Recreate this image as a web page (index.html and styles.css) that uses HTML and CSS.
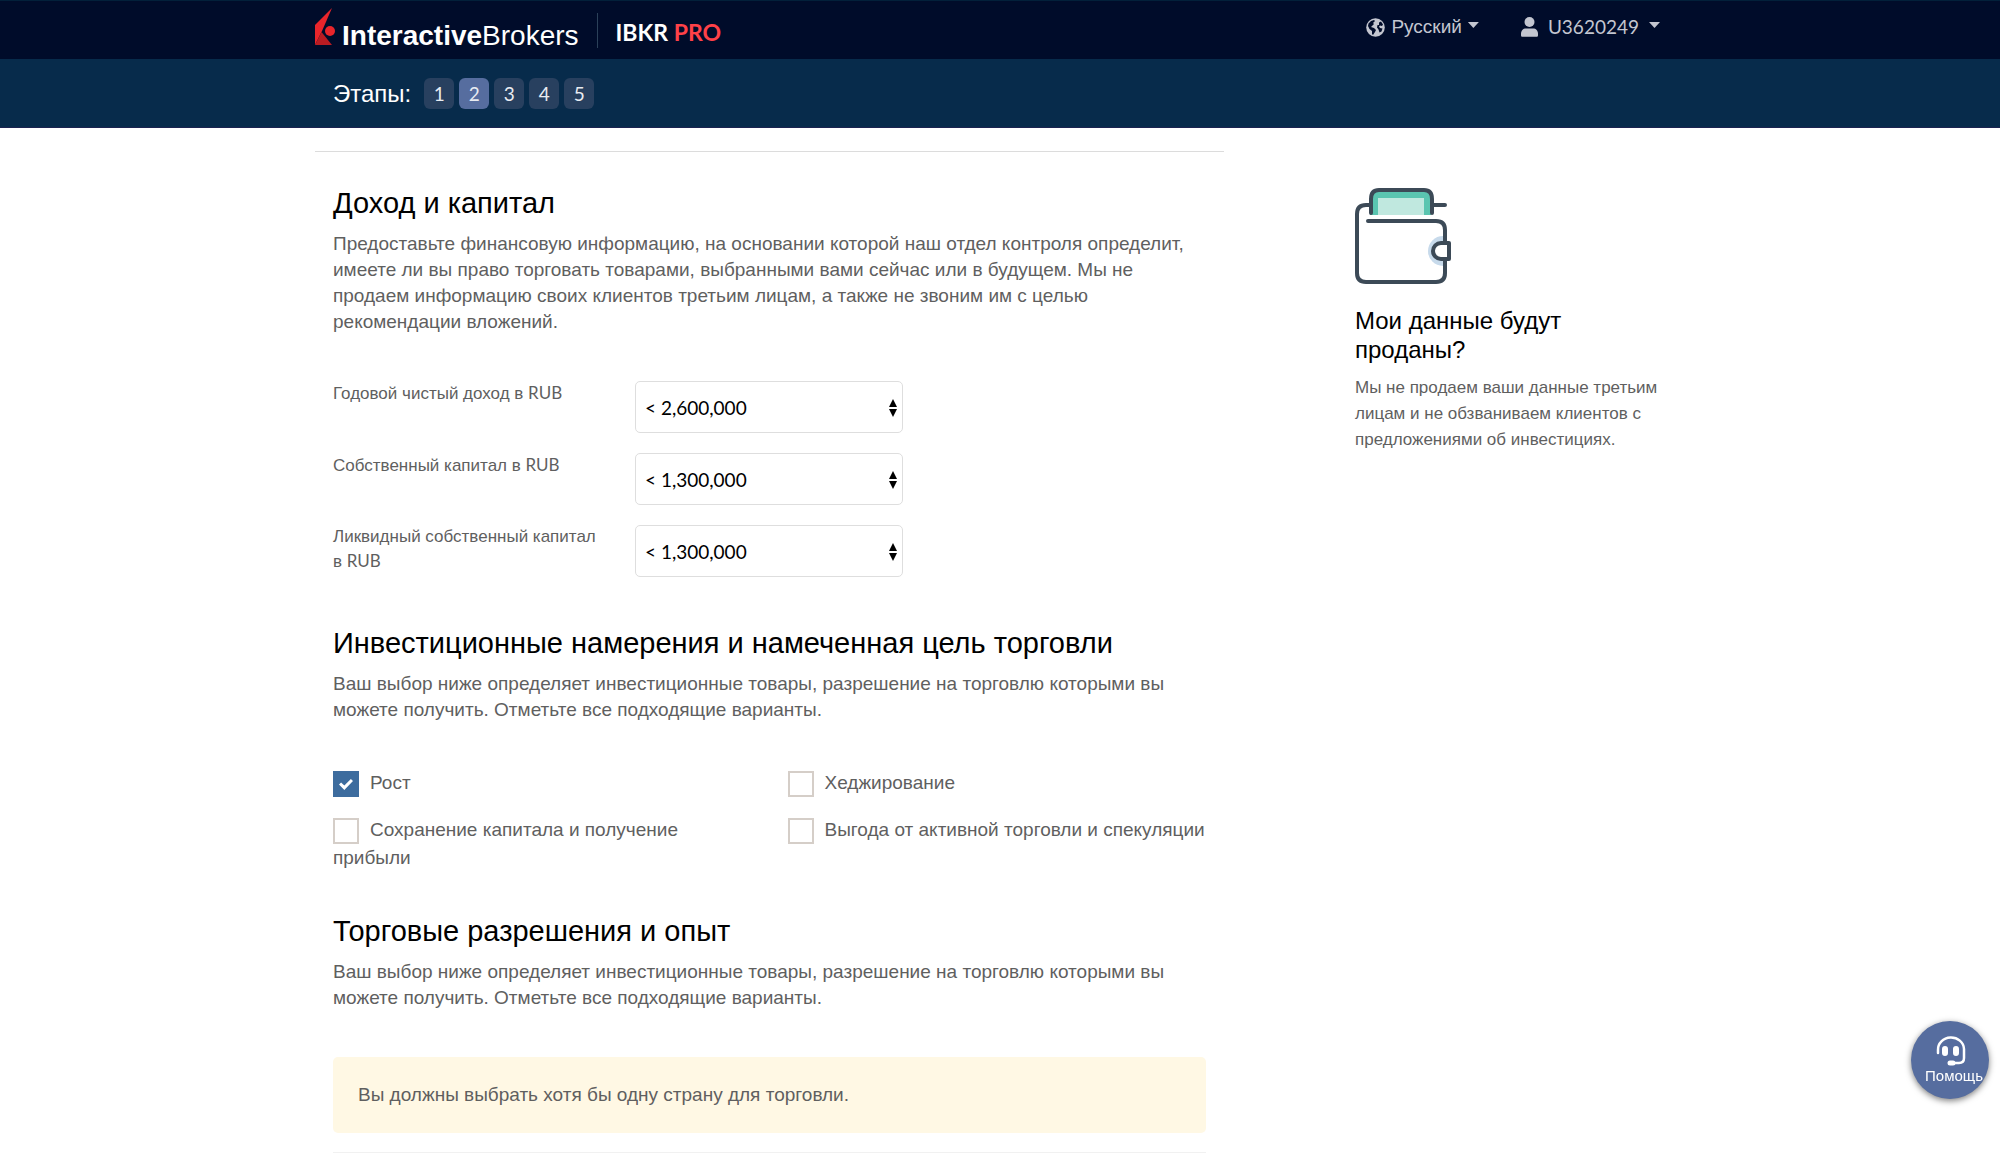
FILE: index.html
```html
<!DOCTYPE html>
<html lang="ru">
<head>
<meta charset="utf-8">
<meta name="viewport" content="width=device-width, initial-scale=1">
<title>Доход и капитал</title>
<link rel="stylesheet" href="styles.css">
</head>
<body>
<header class="topbar">
  <div class="container topbar-inner">
    <a class="brand" href="#">
      <svg class="brand-mark" width="21" height="38" viewBox="0 0 21 38" aria-hidden="true">
        <path d="M17 0 0 17v20L7 23Z" fill="#e8252b"/>
        <path d="M0 37 6.500 24 17 37Z" fill="#b91c22"/>
        <circle cx="15" cy="23" r="5" fill="#e8252b"/>
      </svg>
      <span class="brand-name"><b>Interactive</b>Brokers</span>
    </a>
    <span class="plan">IBKR <span class="plan-pro">PRO</span></span>
    <nav class="account">
      <button class="menu-button" type="button">
        <svg width="19" height="19" viewBox="0 0 19 19" aria-hidden="true">
          <circle cx="9.500" cy="9.500" r="9.300" fill="#c3c6d0"/>
          <path d="M2.500 5.500 5 3l3-1 1 1-2 2 1 1-2 2-1 1 3 1 2 2-1 2-2 3-1-1v-3L3.500 11 2 8Z" fill="#000c2a"/>
          <path d="M13 4.500 15 3.500l2 3-1 1.500-2-.5-1 1 1 1.500 2.500.500-1 3-2 1-1-3-1.500-2 .500-2.500L13 7Z" fill="#000c2a"/>
        </svg>
        <span>Русский</span>
        <span class="caret"></span>
      </button>
      <button class="menu-button menu-user" type="button">
        <svg width="17" height="20" viewBox="0 0 17 20" aria-hidden="true">
          <circle cx="8.500" cy="5" r="5" fill="#c3c6d0"/>
          <path d="M0 17c0-3.500 2-5.500 5-5.500h7c3 0 5 2 5 5.500v1.200c0 1-.600 1.500-1.500 1.500h-14C.600 19.700 0 19.200 0 18.200Z" fill="#c3c6d0"/>
        </svg>
        <span class="latin">U3620249</span>
        <span class="caret"></span>
      </button>
    </nav>
  </div>
</header>

<nav class="steps">
  <div class="container steps-inner">
    <span class="steps-title">Этапы:</span>
    <ol class="steps-list">
      <li><a class="step" href="#">1</a></li>
      <li><a class="step step-current" href="#" aria-current="step">2</a></li>
      <li><a class="step" href="#">3</a></li>
      <li><a class="step" href="#">4</a></li>
      <li><a class="step" href="#">5</a></li>
    </ol>
  </div>
</nav>

<div class="container page">
  <main class="main">
    <section class="section">
      <h2>Доход и капитал</h2>
      <p class="lead">Предоставьте финансовую информацию, на основании которой наш отдел контроля определит, имеете ли вы право торговать товарами, выбранными вами сейчас или в будущем. Мы не продаем информацию своих клиентов третьим лицам, а также не звоним им с целью рекомендации вложений.</p>
      <div class="fields">
        <div class="field">
          <label for="income">Годовой чистый доход в <span class="latin">RUB</span></label>
          <div class="select">
            <select id="income"><option>&lt; 2,600,000</option></select>
            <svg class="select-arrows" width="8" height="18" viewBox="0 0 8 18" aria-hidden="true"><path d="M4 0 8 8H0ZM4 18 0 10h8Z"/></svg>
          </div>
        </div>
        <div class="field">
          <label for="worth">Собственный капитал в <span class="latin">RUB</span></label>
          <div class="select">
            <select id="worth"><option>&lt; 1,300,000</option></select>
            <svg class="select-arrows" width="8" height="18" viewBox="0 0 8 18" aria-hidden="true"><path d="M4 0 8 8H0ZM4 18 0 10h8Z"/></svg>
          </div>
        </div>
        <div class="field">
          <label for="liquid">Ликвидный собственный капитал в <span class="latin">RUB</span></label>
          <div class="select">
            <select id="liquid"><option>&lt; 1,300,000</option></select>
            <svg class="select-arrows" width="8" height="18" viewBox="0 0 8 18" aria-hidden="true"><path d="M4 0 8 8H0ZM4 18 0 10h8Z"/></svg>
          </div>
        </div>
      </div>
    </section>

    <section class="section">
      <h2>Инвестиционные намерения и намеченная цель торговли</h2>
      <p class="lead">Ваш выбор ниже определяет инвестиционные товары, разрешение на торговлю которыми вы можете получить. Отметьте все подходящие варианты.</p>
      <div class="options">
        <label class="option"><input type="checkbox" checked>Рост</label>
        <label class="option"><input type="checkbox">Хеджирование</label>
        <label class="option"><input type="checkbox">Сохранение капитала и получение прибыли</label>
        <label class="option"><input type="checkbox">Выгода от активной торговли и спекуляции</label>
      </div>
    </section>

    <section class="section">
      <h2>Торговые разрешения и опыт</h2>
      <p class="lead">Ваш выбор ниже определяет инвестиционные товары, разрешение на торговлю которыми вы можете получить. Отметьте все подходящие варианты.</p>
      <p class="alert" role="alert">Вы должны выбрать хотя бы одну страну для торговли.</p>
      <hr class="rule">
    </section>
  </main>

  <aside class="aside">
    <svg class="wallet" width="96" height="97" viewBox="0 0 96 97" fill="none" stroke="#3c4a57" stroke-width="4" stroke-linecap="round" stroke-linejoin="round" aria-hidden="true">
      <path d="M88 48a15 15 0 0 0 0 30Z" fill="#c7daeb" stroke="none"/>
      <path d="M15 27V9c0-5 2-7 7-7h47c5 0 7 2 7 7v18Z" fill="#5ac5b0" stroke="none"/>
      <path d="M23 10h46v17H23Z" fill="#c0e8df" stroke="none"/>
      <path d="M16 25V11c0-6 3-9 8-9h45c5 0 8 3 8 9v14"/>
      <path d="M15 17h-4c-6 0-9 3-9 9v59c0 6 3 9 9 9h70c6 0 9-3 9-9V73M79 17h11"/>
      <path d="M13 33h68c6 0 9 3 9 9v12"/>
      <path d="M94 55h-8a8 8 0 0 0 0 16h8Z" fill="#fff"/>
    </svg>
    <h3>Мои данные будут проданы?</h3>
    <p>Мы не продаем ваши данные третьим лицам и не обзваниваем клиентов с предложениями об инвестициях.</p>
  </aside>
</div>

<button class="help" type="button">
  <svg class="help-icon" width="30" height="30" viewBox="0 0 30 30" fill="none" stroke="#fff" stroke-width="2.500" stroke-linecap="round" aria-hidden="true">
    <path d="M2 17v-3a13 12 0 0 1 26-1v9c0 4-2 5-5 5h-8"/>
    <path d="M9 13v4M20 13v4" stroke-width="6"/>
    <path d="M14 27h3" stroke-width="5"/>
  </svg>
  <span>Помощь</span>
</button>
</body>
</html>
```
FILE: styles.css
```css
* {
  box-sizing: border-box;
}

body {
  margin: 0;
  background: #fff;
  color: #5f5f5f;
  font-family: "Liberation Sans", Arial, sans-serif;
  font-size: 19px;
  line-height: 26px;
}

h2,
h3,
p,
ol {
  margin: 0;
  padding: 0;
}

h2,
h3 {
  color: #000;
  font-weight: 400;
}

a {
  color: inherit;
  text-decoration: none;
}

button {
  border: 0;
  background: none;
  font: inherit;
  cursor: pointer;
}

.container {
  max-width: 1370px;
  margin: 0 auto;
}

.latin {
  font-family: Lato, "Liberation Sans", sans-serif;
}

/* Top bar */
.topbar {
  border-top: 1px solid #02203a;
  background: #000c2a;
}

.topbar-inner {
  display: flex;
  align-items: flex-start;
  height: 58px;
}

.brand {
  display: flex;
  margin-top: 7px;
  gap: 6px;
  color: #fff;
}

.brand-name {
  padding-top: 12px;
  font-size: 28px;
  line-height: 32px;
}

.plan {
  margin: 12px 0 0 18px;
  padding: 3px 0 0 18px;
  border-left: 1px solid #2b4159;
  color: #fff;
  font-family: Lato, sans-serif;
  font-size: 23px;
  font-weight: 700;
  line-height: 32px;
}

.plan-pro {
  color: #ff4148;
}

.account {
  display: flex;
  gap: 42px;
  margin: 13px 25px 0 auto;
}

.menu-button {
  display: flex;
  align-items: center;
  gap: 6px;
  padding: 0;
  color: #c3c6d0;
}

.menu-user {
  gap: 10px;
}

.caret {
  width: 11px;
  height: 6px;
  margin-bottom: 4px;
  background: currentColor;
  clip-path: polygon(0 0, 100% 0, 50% 100%);
}

/* Step bar */
.steps {
  border-bottom: 1px solid #1c2350;
  background: #072b4b;
}

.steps-inner {
  display: flex;
  align-items: center;
  gap: 13px;
  padding: 19px 18px 18px;
}

.steps-title {
  color: #fff;
  font-size: 24px;
}

.steps-list {
  display: flex;
  gap: 5px;
  list-style: none;
}

.step {
  display: block;
  width: 30px;
  border-radius: 6px;
  background: #28405f;
  color: #e8ecf2;
  font-family: Lato, sans-serif;
  line-height: 31px;
  text-align: center;
}

.step-current {
  background: #566d9f;
}

/* Page columns */
.page {
  display: flex;
  justify-content: space-between;
  padding: 23px 18px 0 0;
}

.main {
  flex: 0 1 909px;
  border-top: 1px solid #dcdcdc;
}

.section {
  padding: 34px 18px 0;
}

.section + .section {
  padding-top: 42px;
}

h2 {
  margin-bottom: 11px;
  font-size: 29px;
  line-height: 34px;
}

.lead {
  margin-bottom: 46px;
}

/* Fields */
.fields {
  display: grid;
  gap: 20px;
  padding-bottom: 7px;
}

.field {
  display: grid;
  grid-template-columns: 266px 268px;
  column-gap: 36px;
}

.field label {
  font-size: 17px;
  line-height: 24px;
}

.select {
  position: relative;
}

.select select {
  display: block;
  width: 100%;
  height: 52px;
  padding: 0 9px;
  appearance: none;
  border: 1px solid #dedede;
  border-radius: 5px;
  background: #fff;
  color: #000;
  font-family: Lato, sans-serif;
  font-size: 19px;
}

.select-arrows {
  position: absolute;
  top: 18px;
  right: 6px;
  pointer-events: none;
}

/* Check boxes */
.options {
  display: grid;
  grid-template-columns: 1fr 1fr;
  gap: 19px 36px;
}

.option {
  line-height: 28px;
}

.option input {
  width: 26px;
  height: 26px;
  margin: 0 11px 0 0;
  appearance: none;
  border: 2px solid #d5cec8;
  background: #fff;
  vertical-align: -8px;
}

.option input:checked {
  border-color: #3d6c9e;
  background: #3d6c9e;
}

.option input:checked::before {
  content: "";
  display: block;
  width: 14px;
  height: 11px;
  margin: 6px 4px;
  background: #fff;
  clip-path: polygon(0 50%, 15% 32%, 38% 60%, 85% 0, 100% 18%, 38% 100%);
}

.alert {
  padding: 25px;
  border-radius: 5px;
  background: #fff8e4;
}

.rule {
  margin: 19px 0 0;
  border: 0;
  border-top: 1px solid #f1f1f1;
}

/* Side note */
.aside {
  flex: 0 1 312px;
  padding-top: 37px;
  font-size: 17px;
  line-height: 26px;
}

.wallet {
  display: block;
}

h3 {
  margin: 21px 0 11px;
  font-size: 24px;
  line-height: 29px;
}

/* Help button floating over the page */
.help {
  position: fixed;
  right: 11px;
  bottom: 55px;
  display: flex;
  flex-direction: column;
  align-items: center;
  width: 78px;
  height: 78px;
  padding: 15px 0 0 8px;
  border-radius: 50%;
  background: #566d9f;
  box-shadow: 0 2px 6px rgba(0, 0, 0, 0.5);
  color: #fff;
  font-size: 15px;
  line-height: 20px;
}

.help-icon {
  margin-right: 6px;
}
```
